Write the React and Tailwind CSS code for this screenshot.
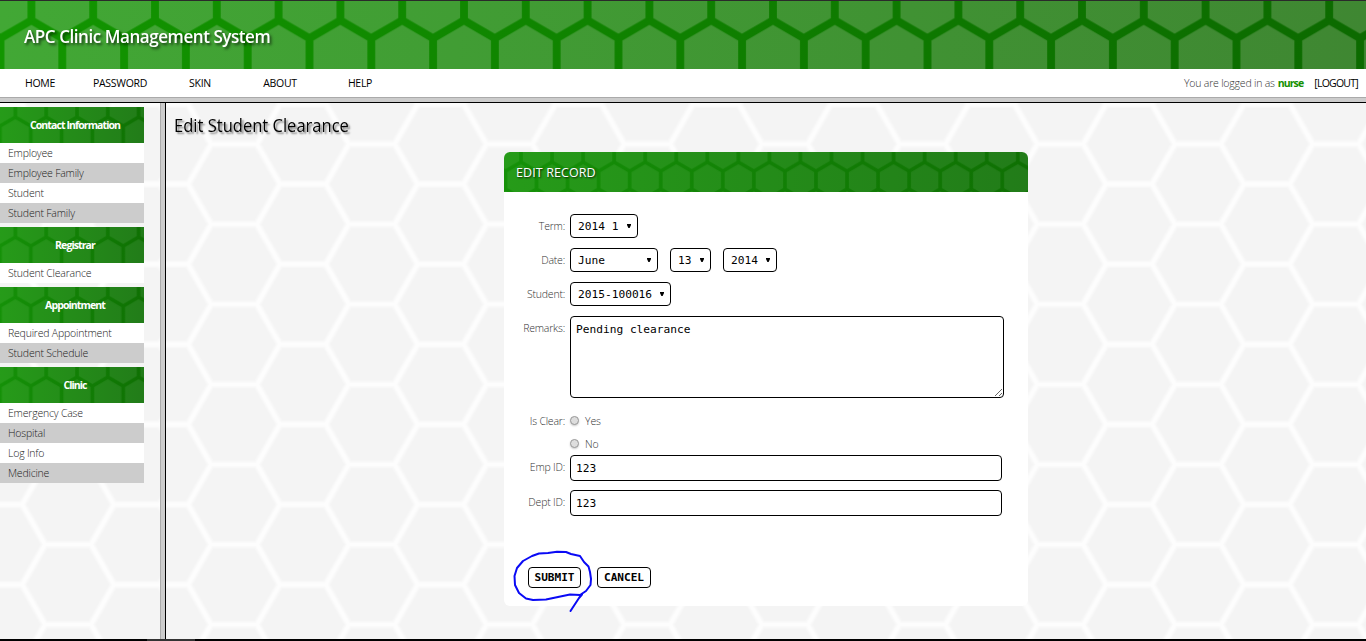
import React, { useId } from 'react';

const MENU = ['HOME', 'PASSWORD', 'SKIN', 'ABOUT', 'HELP'];

const GROUPS = [
  { title: 'Contact Information', items: ['Employee', 'Employee Family', 'Student', 'Student Family'] },
  { title: 'Registrar', items: ['Student Clearance'] },
  { title: 'Appointment', items: ['Required Appointment', 'Student Schedule'] },
  { title: 'Clinic', items: ['Emergency Case', 'Hospital', 'Log Info', 'Medicine'] },
];

/* Pointy-top honeycomb; step is the distance between neighbouring uprights. */
function GreenComb({ step, x, y, stroke, fill, line }) {
  const id = useId();
  const s = step / Math.sqrt(3);
  const h = step / 2;
  const d = `M0 ${-s}V0L${h} ${s / 2}V${s * 1.5}L0 ${s * 2}V${s * 4}M${step} ${-s}V0L${h} ${s / 2}M${h} ${s * 1.5}L${step} ${s * 2}V${s * 4}M0 ${s * 3}L${h} ${s * 3.5}L${step} ${s * 3}`;
  return (
    <svg className="absolute inset-0 h-full w-full" aria-hidden="true">
      <defs>
        <linearGradient id={id + 'f'} x1="0" y1="0" x2="1" y2="0">
          <stop offset="0" stopColor={fill[0]} />
          <stop offset="1" stopColor={fill[1]} />
        </linearGradient>
        <linearGradient id={id + 'l'} x1="0" y1="0" x2="1" y2="0">
          <stop offset="0" stopColor={line[0]} />
          <stop offset="1" stopColor={line[1]} />
        </linearGradient>
        <pattern id={id + 'p'} width={step} height={s * 3} x={x} y={y} patternUnits="userSpaceOnUse">
          <path d={d} fill="none" stroke="#fff" strokeWidth={stroke} />
        </pattern>
        <mask id={id + 'm'} maskUnits="userSpaceOnUse" x="0" y="0" width="1400" height="100">
          <rect width="1400" height="100" fill={`url(#${id}p)`} />
        </mask>
      </defs>
      <rect width="100%" height="100%" fill={`url(#${id}f)`} />
      <rect width="100%" height="100%" fill={`url(#${id}l)`} mask={`url(#${id}m)`} />
    </svg>
  );
}

/* Flat-top honeycomb used behind the panes. */
function PaleComb() {
  const id = useId();
  return (
    <svg className="absolute inset-0 h-full w-full" aria-hidden="true">
      <defs>
        <pattern id={id} width="137.7" height="80.1" x="-0.8" y="1" patternUnits="userSpaceOnUse">
          <g fill="none" strokeLinejoin="round">
            {[['#f7f7f7', 8], ['#fafafa', 6], ['#fdfdfd', 3.6]].map(([c, w]) => (
              <path
                key={w}
                stroke={c}
                strokeWidth={w}
                d="M-23 0H22.95L45.9 40.05H91.8L114.75 0H160M22.95 80.1L45.9 40.05M91.8 40.05L114.75 80.1H160M-23 80.1H22.95"
              />
            ))}
          </g>
        </pattern>
      </defs>
      <rect width="100%" height="100%" fill="#f4f4f4" />
      <rect width="100%" height="100%" fill={`url(#${id})`} />
    </svg>
  );
}

function Select({ value, className }) {
  return (
    <button type="button" className={`flex h-6 items-center justify-between rounded-[4px] border border-black bg-white pr-[6px] pl-[7px] font-['DejaVu_Sans_Mono',monospace] text-[11.2px] whitespace-pre text-black ${className}`}>
      <span className="pt-[2px]">{value}</span>
      <svg className="mb-px" width="4" height="4" viewBox="0 0 4 4" aria-hidden="true"><path d="M0 0H4V1L2.6 4H1.4L0 1Z" /></svg>
    </button>
  );
}

function Row({ label, className, children }) {
  return (
    <div className={`flex ${className}`}>
      <div className="w-[61px] shrink-0 text-right text-[10.5px] leading-6 font-light tracking-[-0.2px] text-[#333]">{label}</div>
      <div className="ml-[5px] flex">{children}</div>
    </div>
  );
}

function Radio({ label }) {
  return (
    <label className="flex h-[23px] items-center text-[10.5px] font-light tracking-[-0.15px] text-[#333]">
      <span className="mr-[6px] h-[9px] w-[9px] rounded-full border border-[#999] bg-[#ddd] shadow-[0_1px_2px_#ccc]" />
      <span className="pt-[2px]">{label}</span>
    </label>
  );
}

const INPUT = "h-[26px] w-[432px] rounded-[4px] border border-black bg-white px-[5px] font-['DejaVu_Sans_Mono',monospace] text-[11.2px] text-black outline-none";
const BUTTON = "h-[21px] rounded-[4px] border border-black bg-white text-center font-['DejaVu_Sans_Mono',monospace] text-[11.1px] leading-[19px] font-bold text-black";

export default function App() {
  return (
    <div className="flex h-[641px] w-[1366px] flex-col overflow-hidden bg-white font-['Open_Sans',sans-serif] text-black">
      <div className="h-px shrink-0 bg-[#2a2a2a]" />
      <header className="relative flex h-[68px] shrink-0 items-center pt-[2px] pl-6">
        <GreenComb step={61.8} x={31.4} y={19.4} stroke={7.8} fill={['#42a835', '#3f8732']} line={['#129600', '#0c6a00']} />
        <h1 className="relative origin-left scale-x-[0.922] text-[18.5px] font-semibold tracking-[-0.5px] whitespace-nowrap text-white [text-shadow:2px_2px_3px_#000a]">APC Clinic Management System</h1>
      </header>
      <nav className="flex h-7 shrink-0 items-center bg-white pt-[2px] text-[10.5px]">
        {MENU.map((m) => (
          <a key={m} className="w-20 text-center font-medium tracking-[-0.3px]">{m}</a>
        ))}
        <div className="ml-auto flex pr-[8px] whitespace-nowrap">
          <span className="font-light tracking-[-0.2px] text-[#333]">You are logged in as</span>
          <b className="ml-[3px] tracking-[-0.9px] text-[#149000]">nurse</b>
          <a className="ml-[11px] tracking-[-0.75px]">[LOGOUT]</a>
        </div>
      </nav>
      <div className="h-[6px] shrink-0 border-t border-b border-t-[#aaa] border-b-black bg-[#ccc]" />
      <div className="flex h-[536px] shrink-0">
        <aside className="relative w-40 shrink-0">
          <PaleComb />
          <div className="relative flex w-36 flex-col gap-1 pt-1">
            {GROUPS.map((g) => (
              <section key={g.title}>
                <h2 className="relative flex h-9 items-center justify-center pt-[2px] pl-[6px] text-[10.5px] font-bold text-white">
                  <GreenComb step={30.8} x={15.4} y={10.2} stroke={3.6} fill={['#269b19', '#227c19']} line={['#159108', '#0f7003']} />
                  <span className="relative tracking-[-0.9px]">{g.title}</span>
                </h2>
                {g.items.map((item) => (
                  <a key={item} className="block h-5 bg-white pl-2 text-[10.5px] leading-[21px] font-light tracking-[-0.2px] text-[#222] odd:bg-[#ccc]">{item}</a>
                ))}
              </section>
            ))}
          </div>
        </aside>
        <div className="w-[6px] shrink-0 border-r border-l border-r-black border-l-[#aaa] bg-[#ccc]" />
        <main className="relative grow">
          <PaleComb />
          <div className="relative pt-[10px] pl-2">
            <h2 className="h-[26px] w-max origin-left scale-x-[0.945] text-[17.5px] leading-[25px] font-medium [text-shadow:2px_2px_2px_#0007]">Edit Student Clearance</h2>
          </div>
          <form className="relative mt-[13px] ml-[338px] h-[454px] w-[524px] rounded-md bg-white">
            <div className="relative flex h-10 items-center overflow-hidden rounded-t-md pt-[2px] pl-[12px] text-[12.5px] text-white">
              <GreenComb step={31.05} x={17} y={10.2} stroke={3.6} fill={['#269b19', '#227c19']} line={['#159108', '#0f7003']} />
              <span className="relative tracking-[0.1px] [text-shadow:1px_1px_2px_#000c]">EDIT RECORD</span>
            </div>
            <div className="pt-[22px]">
              <Row label="Term:" className="h-[34px]"><Select value="2014 1" className="w-[68px]" /></Row>
              <Row label="Date:" className="h-[34px]">
                <Select value="June" className="w-[88px]" />
                <Select value="13" className="ml-3 w-[41px]" />
                <Select value="2014" className="ml-3 w-[54px]" />
              </Row>
              <Row label="Student:" className="h-[34px]"><Select value="2015-100016" className="w-[101px]" /></Row>
              <Row label="Remarks:" className="h-[93px]">
                <textarea defaultValue="Pending clearance" className="h-[82px] w-[434px] resize rounded-[4px] border border-black bg-white px-[5px] py-[5px] font-['DejaVu_Sans_Mono',monospace] text-[11.2px] leading-4 text-black outline-none" />
              </Row>
              <Row label="Is Clear:" className="h-[46px]">
                <div className="flex flex-col"><Radio label="Yes" /><Radio label="No" /></div>
              </Row>
              <Row label="Emp ID:" className="h-[35px]"><input defaultValue="123" className={INPUT} /></Row>
              <Row label="Dept ID:" className="h-[77px]"><input defaultValue="123" className={INPUT} /></Row>
              <div className="relative flex gap-4 pl-6">
                <button type="button" className={`${BUTTON} w-[53px]`}>SUBMIT</button>
                <button type="button" className={`${BUTTON} w-[54px]`}>CANCEL</button>
                <svg className="absolute top-[-21px] left-[6px]" width="90" height="70" viewBox="510 546 90 70" fill="none" stroke="#0a0af5" strokeWidth="2" strokeLinecap="round" strokeLinejoin="round" aria-hidden="true">
                  <path d="M523 561L532 556L539 553.5L548 553L557 551.7L566 552L571 554L580 556L584 562L588.5 566.5L590 572L591 579L590.5 585L586 591L580 595L570 594.5L558 597L546 599.5L533 600L526 598.5L519 593L515 585L514.5 576L517 568L523 561M582 594.5L579 598L570.5 611" />
                </svg>
              </div>
            </div>
          </form>
        </main>
      </div>
      <div className="flex h-[2px] shrink-0 bg-black pl-[147px]"><div className="w-12 bg-[#333]" /></div>
    </div>
  );
}
